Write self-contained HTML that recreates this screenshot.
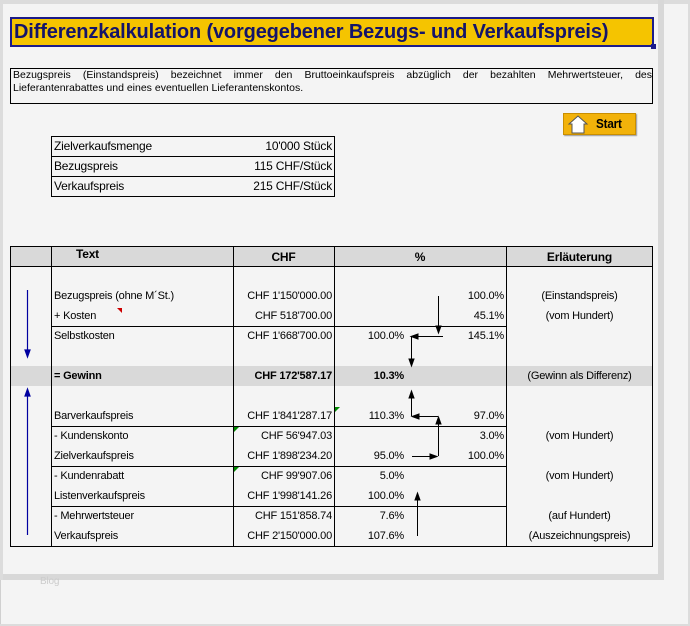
<!DOCTYPE html>
<html><head><meta charset="utf-8"><style>
*{margin:0;padding:0;box-sizing:border-box}
body{width:690px;height:626px;background:#f4f4f4;position:relative;overflow:hidden;font-family:"Liberation Sans",Arial,sans-serif;color:#000}
.a{position:absolute}
.t{position:absolute;font-size:11px;line-height:20px;white-space:nowrap;letter-spacing:-0.2px}
.r{text-align:right}
.c{text-align:center}
.b{font-weight:bold}
</style></head><body>
<div class="a" style="left:0;top:0;width:690px;height:4px;background:#dcdcdc"></div>
<div class="a" style="left:0;top:0;width:3px;height:580px;background:#dcdcdc"></div>
<div class="a" style="left:658px;top:0;width:6px;height:580px;background:#d8d8d8"></div>
<div class="a" style="left:3px;top:574px;width:661px;height:6px;background:#d8d8d8"></div>
<div class="a" style="left:0;top:580px;width:1px;height:46px;background:#d0d0d0"></div>
<div class="a" style="left:0;top:624px;width:690px;height:2px;background:#dcdcdc"></div>
<div class="a" style="left:688px;top:0;width:2px;height:626px;background:#dcdcdc"></div>
<div class="t" style="left:40px;top:572px;color:#ccc;font-size:10px">Blog</div>

<div class="a" style="left:10px;top:17px;width:644px;height:30px;background:#f5c400;border:2px solid #1c1c8a"></div>
<div class="a" style="left:651px;top:44px;width:5px;height:5px;background:#1c1c8a"></div>
<div class="t b" style="left:14px;top:18px;line-height:28px;font-size:20px;color:#14146a;letter-spacing:-0.15px">Differenzkalkulation (vorgegebener Bezugs- und Verkaufspreis)</div>

<div class="a" style="left:10px;top:68px;width:643px;height:36px;border:1px solid #000"></div>
<div class="a" style="left:13px;top:69px;width:639px;font-size:10.5px;line-height:13px;text-align:justify;text-align-last:justify;white-space:nowrap">Bezugspreis (Einstandspreis) bezeichnet immer den Bruttoeinkaufspreis abzüglich der bezahlten Mehrwertsteuer, des</div>
<div class="a" style="left:13px;top:82px;font-size:10.5px;line-height:13px;white-space:nowrap">Lieferantenrabattes und eines eventuellen Lieferantenskontos.</div>

<div class="a" style="left:563px;top:113px;width:73px;height:22px;background:#f2b20a;border:1px solid #c98e00;box-shadow:1px 1px 1px #999"></div>
<svg class="a" style="left:566px;top:114px" width="24" height="21"><path d="M3 10 L12 2 L21 10 L18 10 L18 19 L6 19 L6 10Z" fill="#fff" stroke="#555" stroke-width="1"/></svg>
<div class="t b" style="left:596px;top:114px;font-size:13px;transform:scaleX(0.9);transform-origin:left">Start</div>

<div class="a" style="left:51px;top:136px;width:284px;height:61px;border:1px solid #000"></div>
<div class="a" style="left:51px;top:156px;width:284px;height:1px;background:#000"></div>
<div class="a" style="left:51px;top:176px;width:284px;height:1px;background:#000"></div>
<div class="t" style="left:54px;top:136px;font-size:12px">Zielverkaufsmenge</div>
<div class="t" style="left:54px;top:156px;font-size:12px">Bezugspreis</div>
<div class="t" style="left:54px;top:176px;font-size:12px">Verkaufspreis</div>
<div class="t r" style="left:200px;width:132px;top:136px;font-size:12px">10'000 Stück</div>
<div class="t r" style="left:200px;width:132px;top:156px;font-size:12px">115 CHF/Stück</div>
<div class="t r" style="left:200px;width:132px;top:176px;font-size:12px">215 CHF/Stück</div>

<div class="a" style="left:10px;top:246px;width:643px;height:21px;background:#d9d9d9"></div>
<div class="a" style="left:10px;top:366px;width:643px;height:20px;background:#d9d9d9"></div>
<div class="a" style="left:10px;top:246px;width:643px;height:301px;border:1px solid #000"></div>
<div class="a" style="left:10px;top:266px;width:643px;height:1px;background:#000"></div>
<div class="a" style="left:51px;top:246px;width:1px;height:300px;background:#000"></div>
<div class="a" style="left:233px;top:246px;width:1px;height:300px;background:#000"></div>
<div class="a" style="left:334px;top:246px;width:1px;height:300px;background:#000"></div>
<div class="a" style="left:506px;top:246px;width:1px;height:300px;background:#000"></div>
<div class="a" style="left:51px;top:326px;width:455px;height:1px;background:#000"></div>
<div class="a" style="left:51px;top:426px;width:455px;height:1px;background:#000"></div>
<div class="a" style="left:51px;top:466px;width:455px;height:1px;background:#000"></div>
<div class="a" style="left:51px;top:506px;width:455px;height:1px;background:#000"></div>

<div class="t b" style="left:76px;top:244px;font-size:12px">Text</div>
<div class="t b c" style="left:233px;width:101px;top:247px;font-size:12px">CHF</div>
<div class="t b c" style="left:334px;width:172px;top:247px;font-size:12px">%</div>
<div class="t b c" style="left:506px;width:147px;top:247px;font-size:12px">Erläuterung</div>

<div class="t" style="left:54px;top:286px">Bezugspreis (ohne M´St.)</div>
<div class="t" style="left:54px;top:306px">+ Kosten</div>
<div class="t" style="left:54px;top:326px">Selbstkosten</div>
<div class="t b" style="left:54px;top:366px">= Gewinn</div>
<div class="t" style="left:54px;top:406px">Barverkaufspreis</div>
<div class="t" style="left:54px;top:426px">- Kundenskonto</div>
<div class="t" style="left:54px;top:446px">Zielverkaufspreis</div>
<div class="t" style="left:54px;top:466px">- Kundenrabatt</div>
<div class="t" style="left:54px;top:486px">Listenverkaufspreis</div>
<div class="t" style="left:54px;top:506px">- Mehrwertsteuer</div>
<div class="t" style="left:54px;top:526px">Verkaufspreis</div>

<div class="t r" style="left:233px;width:99px;top:286px">CHF 1'150'000.00</div>
<div class="t r" style="left:233px;width:99px;top:306px">CHF 518'700.00</div>
<div class="t r" style="left:233px;width:99px;top:326px">CHF 1'668'700.00</div>
<div class="t r b" style="left:233px;width:99px;top:366px">CHF 172'587.17</div>
<div class="t r" style="left:233px;width:99px;top:406px">CHF 1'841'287.17</div>
<div class="t r" style="left:233px;width:99px;top:426px">CHF 56'947.03</div>
<div class="t r" style="left:233px;width:99px;top:446px">CHF 1'898'234.20</div>
<div class="t r" style="left:233px;width:99px;top:466px">CHF 99'907.06</div>
<div class="t r" style="left:233px;width:99px;top:486px">CHF 1'998'141.26</div>
<div class="t r" style="left:233px;width:99px;top:506px">CHF 151'858.74</div>
<div class="t r" style="left:233px;width:99px;top:526px">CHF 2'150'000.00</div>

<div class="t r" style="left:334px;width:70px;top:326px">100.0%</div>
<div class="t r b" style="left:334px;width:70px;top:366px">10.3%</div>
<div class="t r" style="left:334px;width:70px;top:406px">110.3%</div>
<div class="t r" style="left:334px;width:70px;top:446px">95.0%</div>
<div class="t r" style="left:334px;width:70px;top:466px">5.0%</div>
<div class="t r" style="left:334px;width:70px;top:486px">100.0%</div>
<div class="t r" style="left:334px;width:70px;top:506px">7.6%</div>
<div class="t r" style="left:334px;width:70px;top:526px">107.6%</div>

<div class="t r" style="left:440px;width:64px;top:286px">100.0%</div>
<div class="t r" style="left:440px;width:64px;top:306px">45.1%</div>
<div class="t r" style="left:440px;width:64px;top:326px">145.1%</div>
<div class="t r" style="left:440px;width:64px;top:406px">97.0%</div>
<div class="t r" style="left:440px;width:64px;top:426px">3.0%</div>
<div class="t r" style="left:440px;width:64px;top:446px">100.0%</div>

<div class="t c" style="left:506px;width:147px;top:286px">(Einstandspreis)</div>
<div class="t c" style="left:506px;width:147px;top:306px">(vom Hundert)</div>
<div class="t c" style="left:506px;width:147px;top:366px">(Gewinn als Differenz)</div>
<div class="t c" style="left:506px;width:147px;top:426px">(vom Hundert)</div>
<div class="t c" style="left:506px;width:147px;top:466px">(vom Hundert)</div>
<div class="t c" style="left:506px;width:147px;top:506px">(auf Hundert)</div>
<div class="t c" style="left:506px;width:147px;top:526px">(Auszeichnungspreis)</div>

<svg class="a" style="left:0;top:0" width="690" height="626">
<g stroke="#0000a0" stroke-width="1.2" fill="#0000a0">
<line x1="27.5" y1="290" x2="27.5" y2="352"/><path d="M25 350 L30 350 L27.5 357Z"/>
<line x1="27.5" y1="394" x2="27.5" y2="535"/><path d="M25 396 L30 396 L27.5 389Z"/>
</g>
<g stroke="#000" stroke-width="1" fill="#000">
<line x1="438.5" y1="296" x2="438.5" y2="329"/><path d="M436 326 L441 326 L438.5 333Z"/>
<line x1="443" y1="336.5" x2="415" y2="336.5"/><path d="M418 334 L418 339 L411 336.5Z"/>
<line x1="411.5" y1="336" x2="411.5" y2="361"/><path d="M409 359 L414 359 L411.5 366Z"/>
<line x1="411.5" y1="416" x2="411.5" y2="396"/><path d="M409 398 L414 398 L411.5 391Z"/>
<line x1="438" y1="416.5" x2="416" y2="416.5"/><path d="M419 414 L419 419 L412 416.5Z"/>
<line x1="438.5" y1="456" x2="438.5" y2="422"/><path d="M436 424 L441 424 L438.5 417Z"/>
<line x1="412" y1="456.5" x2="432" y2="456.5"/><path d="M430 454 L430 459 L437 456.5Z"/>
<line x1="417.5" y1="536" x2="417.5" y2="498"/><path d="M415 500 L420 500 L417.5 493Z"/>
</g>
<path d="M117 308 L122 308 L122 313Z" fill="#c00"/>
<path d="M335 407 L340 407 L335 412Z" fill="#080"/>
<path d="M234 427 L239 427 L234 432Z" fill="#080"/>
<path d="M234 467 L239 467 L234 472Z" fill="#080"/>
</svg>
</body></html>
